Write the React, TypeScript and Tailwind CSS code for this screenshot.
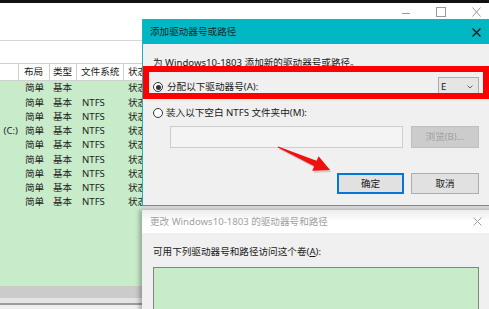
import React from "react";

const rows = [
  { c: "", fs: "" },
  { c: "", fs: "NTFS" },
  { c: "", fs: "NTFS" },
  { c: "(C:)", fs: "NTFS" },
  { c: "", fs: "NTFS" },
  { c: "", fs: "NTFS" },
  { c: "", fs: "NTFS" },
  { c: "", fs: "NTFS" },
  { c: "", fs: "NTFS" },
];

function Radio({ checked }: { checked?: boolean }) {
  return (
    <div className="w-[10px] h-[10px] rounded-full border border-[#333] bg-white flex items-center justify-center shrink-0">
      {checked && <div className="w-[5px] h-[5px] rounded-full bg-[#333]" />}
    </div>
  );
}

export default function App() {
  return (
    <div className="relative w-[489px] h-[309px] overflow-hidden bg-white text-[9.6px] leading-none text-[#1a1a1a] font-['Noto_Sans','Noto_Sans_CJK_SC',sans-serif]">
      {/* background window */}
      <div className="flex flex-col h-full">
        <div className="h-[3px] bg-[#111] shrink-0" />
        <div className="h-[38px] bg-white border-b border-[#d6d6d6] shrink-0 flex justify-end items-start pt-[3px] pr-[8px] gap-[26px]">
          <svg width="8" height="10" viewBox="0 0 8 10" className="mt-[1px]">
            <line x1="0" y1="6.5" x2="8" y2="6.5" stroke="#9a9a9a" strokeWidth="1" />
          </svg>
          <svg width="10" height="10" viewBox="0 0 10 10" className="mt-[1px]">
            <rect x="0.5" y="0.5" width="9" height="9" fill="none" stroke="#9a9a9a" strokeWidth="1" />
          </svg>
          <svg width="9" height="10" viewBox="0 0 9 10" className="mt-[1px]">
            <path d="M0.5 0.5 L8.5 9.5 M8.5 0.5 L0.5 9.5" stroke="#9a9a9a" strokeWidth="1" />
          </svg>
        </div>
        <div className="h-[23px] bg-white border-b border-[#cfcfcf] shrink-0" />
        <div className="h-[17px] bg-white border-b border-[#d0d0d0] shrink-0 flex items-center text-[#222]">
          <div className="w-[19px] h-full border-r border-[#cfcfcf]" />
          <div className="w-[31px] h-full border-r border-[#cfcfcf] pl-[5px] flex items-center">布局</div>
          <div className="w-[27px] h-full border-r border-[#cfcfcf] pl-[3px] flex items-center">类型</div>
          <div className="w-[47px] h-full border-r border-[#cfcfcf] pl-[4px] flex items-center">文件系统</div>
          <div className="w-[40px] h-full pl-[4px] flex items-center">状态</div>
        </div>
        <div className="flex-1 bg-[#c8ecc9] flex flex-col">
          {rows.map((r, i) => (
            <div key={i} className="h-[14.25px] flex items-center text-[#222]">
              <div className="w-[19px] text-right pr-[1px]">{r.c}</div>
              <div className="w-[31px] pl-[6px]">简单</div>
              <div className="w-[27px] pl-[3px]">基本</div>
              <div className="w-[47px] pl-[5px]">{r.fs}</div>
              <div className="w-[40px] pl-[4px]">状态</div>
            </div>
          ))}
        </div>
        <div className="h-[12px] bg-[#cbcbcb] shrink-0" />
        <div className="h-[5px] bg-[#e4e4e4] shrink-0" />
        <div className="h-[2px] bg-[#9c9c9c] shrink-0" />
        <div className="h-[4px] bg-[#efefef] shrink-0" />
      </div>

      {/* dialog 1 */}
      <div className="absolute left-[142px] top-[19px] w-[360px] h-[187px] border border-[#17b3c0] bg-[#f0f0f0] flex flex-col">
        <div className="h-[24px] bg-[#00b7c3] flex items-center justify-between pl-[7px] pr-[20px] text-[#1c2a2c] shrink-0">
          <span>添加驱动器号或路径</span>
          <svg width="9" height="9" viewBox="0 0 9 9">
            <path d="M0.5 0.5 L8.5 8.5 M8.5 0.5 L0.5 8.5" stroke="#111" strokeWidth="1.1" />
          </svg>
        </div>
        <div className="ml-[10px] w-[326px] flex flex-col">
          <div className="h-[14px] mt-[12px] flex items-center">为 Windows10-1803 添加新的驱动器号或路径。</div>
          <div className="h-[20px] mt-[7px] flex items-center">
            <div className="flex items-center gap-[4px] flex-1">
              <Radio checked />
              <span>分配以下驱动器号(A):</span>
            </div>
            <div className="w-[41px] h-[20px] border border-[#adadad] bg-[#e5e5e5] flex items-center justify-between pl-[2px] pr-[5px]">
              <span>E</span>
              <svg width="6" height="4" viewBox="0 0 6 4">
                <path d="M0.5 0.5 L3 3 L5.5 0.5" stroke="#555" strokeWidth="0.9" fill="none" />
              </svg>
            </div>
          </div>
          <div className="h-[14px] mt-[9px] flex items-center gap-[3px]">
            <Radio />
            <span>装入以下空白 NTFS 文件夹中(M):</span>
          </div>
          <div className="h-[22px] mt-[6px] flex items-center gap-[8px]">
            <div className="ml-[17px] w-[233px] h-full border border-[#cdcdcd] bg-[#f4f4f4]" />
            <div className="w-[68px] h-full border border-[#bfbfbf] bg-[#cccccc] text-[#a0a0a0] flex items-center justify-center">浏览(B)...</div>
          </div>
          <div className="h-[21px] mt-[25px] flex justify-end gap-[7px]">
            <div className="w-[67px] h-full border-2 border-[#0078d7] bg-[#e1e1e1] flex items-center justify-center">确定</div>
            <div className="w-[68px] h-full border border-[#adadad] bg-[#e1e1e1] flex items-center justify-center">取消</div>
          </div>
        </div>
      </div>

      {/* gap strip between dialogs */}
      <div className="absolute left-[142px] top-[206px] w-[347px] h-[4px] bg-[#d9d9d9]" />

      {/* dialog 2 */}
      <div className="absolute left-[142px] top-[210px] w-[360px] h-[120px] bg-[#f0f0f0] shadow-[-3px_0_4px_rgba(0,0,0,0.25)] flex flex-col">
        <div className="h-[23px] bg-gradient-to-b from-[#ececec] via-white to-white flex items-center justify-between pl-[8px] pr-[20px] text-[#a0a0a0] shrink-0">
          <span>更改 Windows10-1803 的驱动器号和路径</span>
          <svg width="9" height="9" viewBox="0 0 9 9">
            <path d="M0.5 0.5 L8.5 8.5 M8.5 0.5 L0.5 8.5" stroke="#a0a0a0" strokeWidth="1" />
          </svg>
        </div>
        <div className="ml-[11px] w-[326px] flex flex-col">
          <div className="h-[14px] mt-[12px] flex items-center">
            可用下列驱动器号和路径访问这个卷(<span className="underline">A</span>):
          </div>
          <div className="h-[60px] mt-[8px] border border-[#838383] bg-[#c8ecc9]" />
        </div>
      </div>

      {/* red annotation box */}
      <div className="absolute left-[143px] top-[66px] w-[346px] h-[33px] border-[6px] border-[#ff0000] pointer-events-none" />

      {/* red arrow */}
      <svg className="absolute left-0 top-0 pointer-events-none" width="489" height="309" viewBox="0 0 489 309">
        <polygon
          points="278.2,146.5 316.6,160.8 318.6,156.2 330,170 312.2,170.8 314.2,166.2 277.8,147.5"
          fill="#000"
          opacity="0.15"
          transform="translate(1.5,2)"
        />
        <polygon
          points="278.2,146.5 316.6,160.8 318.6,156.2 330,170 312.2,170.8 314.2,166.2 277.8,147.5"
          fill="#f01010"
        />
      </svg>
    </div>
  );
}
